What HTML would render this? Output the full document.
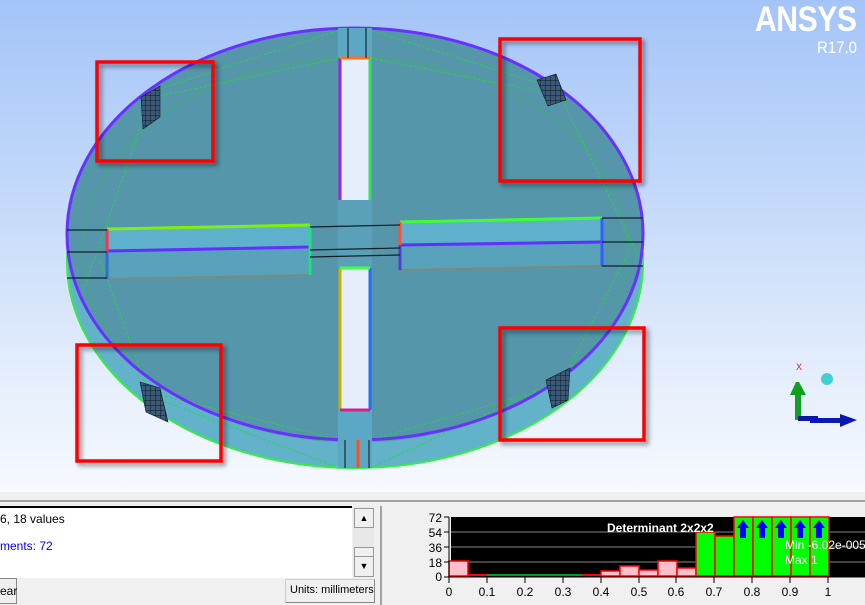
<!DOCTYPE html>
<html><head><meta charset="utf-8"><style>
html,body{margin:0;padding:0;width:865px;height:605px;overflow:hidden;font-family:"Liberation Sans",Arial,sans-serif;}
#view{position:absolute;left:0;top:0;width:865px;height:492px;background:linear-gradient(#a4c4f8 0%,#c8dcfa 45%,#e8f0fc 80%,#f6f9fe 100%);}
#panel{position:absolute;left:0;top:492px;width:865px;height:113px;background:#f0f0f0;}
.t{position:absolute;font-size:12px;white-space:nowrap}
</style></head><body>
<div id="view">
<svg width="865" height="492" style="position:absolute;left:0;top:0">
<defs><filter id="sh" x="-10%" y="-10%" width="130%" height="130%"><feDropShadow dx="3" dy="3" stdDeviation="2.5" flood-color="#000" flood-opacity="0.45"/></filter>
<pattern id="mg" width="5" height="5" patternUnits="userSpaceOnUse"><rect width="5" height="5" fill="#3a5a78"/><path d="M0,0 H5 M0,0 V5" stroke="#101820" stroke-width="1"/></pattern></defs>
<ellipse cx="355" cy="262" rx="288" ry="206" fill="#62b2ca"/>
<ellipse cx="355" cy="262" rx="288" ry="206" fill="none" stroke="#33ee44" stroke-width="2"/>
<ellipse cx="355" cy="234" rx="288" ry="206" fill="#5596aa"/>
<ellipse cx="355" cy="250" rx="272" ry="192" fill="none" stroke="#3fb06a" stroke-width="1.5" opacity="0.6"/>
<g stroke="#22dd33" stroke-width="1" stroke-dasharray="3,2" fill="none" opacity="0.8">
<path d="M150,92 L340,30 M150,98 L340,58 M370,30 L560,90 M370,58 L560,95 M160,395 L340,440 M160,400 L340,468 M370,440 L560,385 M370,468 L560,380 M150,100 L80,300 M560,95 L640,260 M150,395 L100,260 M560,385 L630,250"/>
</g>
<ellipse cx="355" cy="234" rx="288" ry="206" fill="none" stroke="#6a30ff" stroke-width="3"/>
<rect x="340" y="58" width="30" height="142" fill="#e6eefc"/>
<rect x="340" y="268" width="30" height="142" fill="#e6eefc"/>
<rect x="338" y="28" width="34" height="30" fill="#5aa8c4"/>
<rect x="338" y="410" width="34" height="58" fill="#5aa8c4"/>
<rect x="338" y="200" width="34" height="68" fill="#5aa0b8"/>
<line x1="340" y1="58" x2="340" y2="200" stroke="#a020e0" stroke-width="3"/>
<line x1="370" y1="58" x2="370" y2="200" stroke="#30e060" stroke-width="3"/>
<line x1="340" y1="268" x2="340" y2="410" stroke="#c8b000" stroke-width="3"/>
<line x1="370" y1="268" x2="370" y2="410" stroke="#2070f0" stroke-width="3"/>
<line x1="340" y1="58" x2="370" y2="58" stroke="#ff7020" stroke-width="3"/>
<line x1="340" y1="410" x2="370" y2="410" stroke="#d02090" stroke-width="3"/>
<line x1="340" y1="268" x2="370" y2="268" stroke="#40ff40" stroke-width="3"/>
<line x1="358" y1="440" x2="358" y2="468" stroke="#ff5020" stroke-width="3"/>
<line x1="348" y1="28" x2="348" y2="58" stroke="#111" stroke-width="1"/>
<line x1="366" y1="28" x2="366" y2="58" stroke="#111" stroke-width="1"/>
<line x1="345" y1="440" x2="345" y2="468" stroke="#111" stroke-width="1"/>
<line x1="369" y1="440" x2="369" y2="468" stroke="#111" stroke-width="1"/>
<path d="M107,229 L310,225 L310,247 L107,250 Z" fill="#5eb0cc"/>
<path d="M107,250 L310,247 L310,275 L107,279 Z" fill="#58a2bc"/>
<path d="M400,222 L602,218 L602,242 L400,245 Z" fill="#5eb0cc"/>
<path d="M400,245 L602,242 L602,266 L400,270 Z" fill="#58a2bc"/>
<g stroke-width="3">
<line x1="107" y1="229" x2="310" y2="225" stroke="#80ee10"/>
<line x1="107" y1="251" x2="310" y2="247" stroke="#6030ff"/>
<line x1="107" y1="279" x2="310" y2="275" stroke="#7a8a80" stroke-width="2"/>
<line x1="107" y1="229" x2="107" y2="251" stroke="#ff3050"/>
<line x1="107" y1="251" x2="107" y2="279" stroke="#3070d0"/>
<line x1="310" y1="225" x2="310" y2="275" stroke="#20e080"/>
<line x1="400" y1="222" x2="602" y2="218" stroke="#40ff30"/>
<line x1="400" y1="245" x2="602" y2="242" stroke="#6030ff"/>
<line x1="400" y1="270" x2="602" y2="266" stroke="#7a8a80" stroke-width="2"/>
<line x1="400" y1="222" x2="400" y2="245" stroke="#ff5030"/>
<line x1="400" y1="245" x2="400" y2="270" stroke="#5040d0"/>
<line x1="602" y1="218" x2="602" y2="266" stroke="#3060ff"/>
</g>
<g stroke="#10202a" stroke-width="1.2">
<line x1="67" y1="230" x2="107" y2="230"/><line x1="67" y1="252" x2="107" y2="252"/><line x1="67" y1="278" x2="107" y2="278"/>
<line x1="310" y1="227" x2="400" y2="225"/><line x1="310" y1="250" x2="400" y2="248"/><line x1="310" y1="257" x2="400" y2="255"/>
<line x1="602" y1="218" x2="643" y2="218"/><line x1="602" y1="242" x2="643" y2="242"/><line x1="602" y1="266" x2="643" y2="266"/>
</g>
<g fill="url(#mg)" stroke="#0a1a2a" stroke-width="0.6">
<path d="M141,97 L160,86 L160,117 L143,129 Z"/>
<path d="M537,80 L556,74 L566,100 L548,106 Z"/>
<path d="M140,382 L160,388 L168,422 L146,412 Z"/>
<path d="M546,380 L570,368 L568,400 L552,408 Z"/>
</g>
<g fill="none" stroke="#ff0000" stroke-width="3.5" filter="url(#sh)">
<rect x="97" y="62" width="116" height="99"/>
<rect x="500" y="39" width="140" height="142"/>
<rect x="77" y="345" width="144" height="116"/>
<rect x="500" y="328" width="144" height="112"/>
</g>
<polygon points="796,382 790,395 795,395 795,420 801,420 801,395 806,395 799,382" fill="#10a020"/>
<rect x="798" y="416" width="20" height="5" fill="#0a1aa0"/>
<rect x="810" y="418" width="33" height="5" fill="#0a1ab0"/>
<polygon points="840,414 857,420 840,427" fill="#0a1ab0"/>
<circle cx="827" cy="379" r="6" fill="#40d0d8"/>
<text x="796" y="370" font-size="9" fill="#e02020" font-family="Liberation Sans">X</text>
</svg>
<div class="t" style="left:755px;top:0px;font-size:35px;font-weight:bold;color:#fff;transform:scaleX(0.86);transform-origin:left top;letter-spacing:-0.5px">ANSYS</div>
<div class="t" style="left:817px;top:38px;font-size:17px;color:#fff;transform:scaleX(0.88);transform-origin:left top">R17.0</div>
</div>
<div id="panel">
<div style="position:absolute;left:0;top:8px;width:865px;height:2px;background:#a0a0a0"></div>
<div style="position:absolute;left:0;top:14px;width:352px;height:70px;background:#fff;border-top:2px solid #000"></div>
<div class="t" style="left:0;top:20px">6, 18 values</div>
<div class="t" style="left:0;top:47px;color:#0000ff">ments: 72</div>
<div style="position:absolute;left:353px;top:15px;width:21px;height:69px;background:#e8e8e8"></div>
<div style="position:absolute;left:354px;top:16px;width:18px;height:18px;background:#f0f0f0;border:1px solid #999;text-align:center;font-size:9px;line-height:18px">▲</div>
<div style="position:absolute;left:354px;top:55px;width:18px;height:8px;background:#f0f0f0;border:1px solid #999"></div>
<div style="position:absolute;left:354px;top:64px;width:18px;height:19px;background:#f0f0f0;border:1px solid #999;text-align:center;font-size:9px;line-height:19px">▼</div>
<div style="position:absolute;left:-2px;top:86px;width:17px;height:24px;background:#f0f0f0;border:1px solid #888"></div>
<div class="t" style="left:0;top:92px">ear</div>
<div style="position:absolute;left:285px;top:87px;width:88px;height:22px;background:#f0f0f0;border:1px solid #ccc;border-right-color:#888;border-bottom-color:#888"></div>
<div class="t" style="left:290px;top:92px;font-size:11px">Units: millimeters</div>
<div style="position:absolute;left:380px;top:14px;width:2px;height:99px;background:#a0a0a0"></div>
<svg width="865" height="113" style="position:absolute;left:0;top:0" font-family="Liberation Sans" font-size="12">
<rect x="451" y="25" width="414" height="60" fill="#000"/>
<g stroke="#888" stroke-width="1"><line x1="451" y1="40" x2="865" y2="40"/><line x1="451" y1="55" x2="865" y2="55"/><line x1="451" y1="70" x2="865" y2="70"/></g>
<g fill="#ffc0cc" stroke="#ff0000" stroke-width="1.5">
<rect x="449" y="69" width="19" height="15"/>
<rect x="601" y="79" width="19" height="5"/>
<rect x="620" y="74" width="19" height="10"/>
<rect x="639" y="78" width="19" height="6"/>
<rect x="658" y="69" width="19" height="15"/>
<rect x="677" y="76" width="19" height="8"/>
</g>
<line x1="468" y1="83" x2="487" y2="83" stroke="#f00" stroke-width="2"/>
<line x1="487" y1="83" x2="582" y2="83" stroke="#1c1" stroke-width="1.5"/>
<line x1="582" y1="83" x2="601" y2="83" stroke="#f00" stroke-width="2"/>
<g fill="#00ff00" stroke="#ff0000" stroke-width="1.5">
<rect x="696" y="40" width="19" height="44"/>
<rect x="715" y="44" width="19" height="40"/>
<rect x="734" y="25" width="19" height="59"/>
<rect x="753" y="25" width="19" height="59"/>
<rect x="772" y="25" width="19" height="59"/>
<rect x="791" y="25" width="19" height="59"/>
<rect x="810" y="25" width="19" height="59"/>
</g>
<g fill="#0000ff">
<polygon points="743,28 737,36 740,36 740,46 746,46 746,36 749,36"/>
<polygon points="762,28 756,36 759,36 759,46 765,46 765,36 768,36"/>
<polygon points="781,28 775,36 778,36 778,46 784,46 784,36 787,36"/>
<polygon points="800,28 794,36 797,36 797,46 803,46 803,36 806,36"/>
<polygon points="819,28 813,36 816,36 816,46 822,46 822,36 825,36"/>
</g>
<text x="607" y="40" fill="#fff" font-weight="bold">Determinant 2x2x2</text>
<text x="785" y="57" fill="#fff">Min -6.02e-005</text>
<text x="785" y="72" fill="#fff">Max 1</text>
<g fill="#000" text-anchor="end">
<text x="442" y="30">72</text><text x="442" y="45">54</text><text x="442" y="60">36</text><text x="442" y="75">18</text><text x="442" y="89">0</text>
</g>
<line x1="449" y1="25" x2="449" y2="85" stroke="#000"/>
<g stroke="#000"><line x1="444" y1="25" x2="449" y2="25"/><line x1="444" y1="40" x2="449" y2="40"/><line x1="444" y1="55" x2="449" y2="55"/><line x1="444" y1="70" x2="449" y2="70"/><line x1="444" y1="85" x2="449" y2="85"/>
<line x1="449" y1="85" x2="865" y2="85"/></g>
<g fill="#000" text-anchor="middle">
<text x="449" y="104">0</text><text x="487" y="104">0.1</text><text x="525" y="104">0.2</text><text x="563" y="104">0.3</text><text x="601" y="104">0.4</text><text x="639" y="104">0.5</text><text x="676" y="104">0.6</text><text x="714" y="104">0.7</text><text x="752" y="104">0.8</text><text x="790" y="104">0.9</text><text x="828" y="104">1</text>
</g>
<g stroke="#000"><line x1="449" y1="85" x2="449" y2="91"/><line x1="487" y1="85" x2="487" y2="91"/><line x1="525" y1="85" x2="525" y2="91"/><line x1="563" y1="85" x2="563" y2="91"/><line x1="601" y1="85" x2="601" y2="91"/><line x1="639" y1="85" x2="639" y2="91"/><line x1="676" y1="85" x2="676" y2="91"/><line x1="714" y1="85" x2="714" y2="91"/><line x1="752" y1="85" x2="752" y2="91"/><line x1="790" y1="85" x2="790" y2="91"/><line x1="828" y1="85" x2="828" y2="91"/></g>
</svg>
</div>
</body></html>
